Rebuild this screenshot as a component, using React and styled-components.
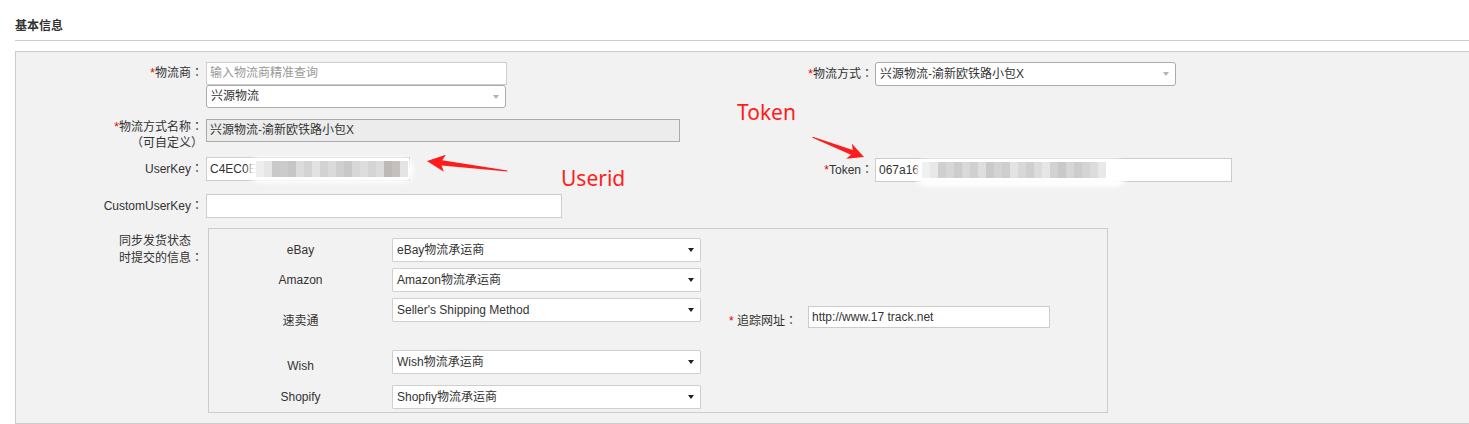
import React from 'react';
import styled, { createGlobalStyle } from 'styled-components';

const GlobalStyle = createGlobalStyle`
  html, body { margin: 0; padding: 0; background: #fff; }
  body {
    font-family: "Liberation Sans", Arial, "Noto Sans CJK SC", sans-serif;
    font-size: 12px;
    color: #333;
  }
  * { box-sizing: border-box; }
`;

const Page = styled.div`
  position: relative;
  width: 1469px;
  height: 424px;
  overflow: hidden;
  padding-left: 15px;
`;

const SectionTitle = styled.h3`
  margin: 0;
  height: 41px;
  padding-top: 19px;
  line-height: 14px;
  font-size: 12px;
  font-weight: bold;
  color: #333;
  border-bottom: 1px solid #ccc;
`;

const Panel = styled.div`
  margin-top: 10px;
  height: 373px;
  background: #f2f2f2;
  border: 1px solid #ccc;
  border-right: none;
  padding-top: 10px;
`;

const FormRow = styled.div`
  display: grid;
  grid-template-columns: 190px 490px 179px 1fr;
  align-items: start;
  margin-top: ${(p) => p.$gap || 0}px;
`;

const Label = styled.div`
  text-align: right;
  padding-right: ${(p) => (p.$pr ?? 3)}px;
  padding-top: ${(p) => p.$pt || 0}px;
  margin-top: ${(p) => p.$mt || 0}px;
  line-height: ${(p) => p.$lh || 24}px;
  height: ${(p) => (p.$height ? `${p.$height}px` : 'auto')};
  white-space: nowrap;
  color: #333;
`;

const Punct = styled.span`
  font-family: "Noto Sans CJK TC", "Noto Sans CJK SC", sans-serif;
  line-height: 0;
`;

const LeftBlock = styled.span`
  display: inline-block;
  text-align: left;
`;

const Req = styled.span`
  color: #e60000;
`;

const FieldStack = styled.div`
  display: flex;
  flex-direction: column;
  margin-top: ${(p) => p.$mt || 0}px;
`;

const TextInput = styled.div`
  position: relative;
  width: ${(p) => p.$w}px;
  height: ${(p) => p.$h || 24}px;
  line-height: ${(p) => (p.$h || 24) - 2}px;
  border: 1px solid ${(p) => p.$border || '#ccc'};
  background: ${(p) => (p.$disabled ? '#ececec' : '#fff')};
  color: ${(p) => (p.$placeholder ? '#999' : '#333')};
  padding: 0 ${(p) => p.$pl ?? 3}px;
  margin-top: ${(p) => p.$mt || 0}px;
  white-space: nowrap;
`;

const SelectBox = styled.div`
  position: relative;
  width: ${(p) => p.$w}px;
  height: ${(p) => p.$h || 24}px;
  line-height: ${(p) => (p.$h || 24) - 2}px;
  border: 1px solid ${(p) => (p.$round ? '#aaa' : '#cfcfcf')};
  border-radius: ${(p) => (p.$round ? 3 : 1)}px;
  background: #fff;
  padding-left: ${(p) => p.$pl ?? 4}px;
  white-space: nowrap;
  color: #333;
`;

const Caret = styled.span`
  position: absolute;
  right: ${(p) => p.$right || 6}px;
  top: 50%;
  margin-top: -2px;
  width: 0;
  height: 0;
  border-left: ${(p) => p.$half || 3.5}px solid transparent;
  border-right: ${(p) => p.$half || 3.5}px solid transparent;
  border-top: 4px solid ${(p) => p.$color || '#222'};
`;

const Smudge = styled.div`
  position: absolute;
  left: ${(p) => p.$x}px;
  top: ${(p) => p.$y}px;
  width: ${(p) => p.$w}px;
  height: ${(p) => p.$h}px;
  background: rgba(255, 255, 255, 0.92);
  border-radius: 10px;
  filter: blur(2px);
`;

const Mosaic = styled.div`
  position: absolute;
  left: ${(p) => p.$x}px;
  top: 3px;
  height: 16px;
  display: flex;
`;

const MosaicCell = styled.span`
  width: 8px;
  height: 100%;
  background: ${(p) => p.$c};
`;

const SyncBox = styled.div`
  grid-column: 2 / 5;
  margin-left: 2px;
  width: 900px;
  height: 185px;
  border: 1px solid #ccc;
  padding-top: 6px;
`;

const PlatformRow = styled.div`
  display: grid;
  grid-template-columns: 183px 309px 1fr;
  height: ${(p) => p.$h}px;
  align-items: center;
`;

const PlatformName = styled.div`
  text-align: center;
  line-height: 14px;
  padding-top: ${(p) => p.$pt || 0}px;
`;

const PlatformSelect = styled(SelectBox)`
  align-self: start;
  margin-top: 3px;
`;

const TrackCell = styled.div`
  align-self: stretch;
  display: flex;
  align-items: center;
  padding-left: 28px;
`;

const TrackLabel = styled.span`
  line-height: 14px;
  margin-right: 11px;
  white-space: nowrap;
`;

const TrackInput = styled(TextInput)`
  align-self: flex-start;
  margin-top: 11px;
`;

const Overlay = styled.svg`
  position: absolute;
  left: 0;
  top: 0;
  pointer-events: none;
`;

const Note = styled.div`
  position: absolute;
  left: ${(p) => p.$x}px;
  top: ${(p) => p.$y}px;
  color: #ff1c1c;
  font-family: "Noto Sans", "Liberation Sans", sans-serif;
  font-size: 21px;
  line-height: 1;
  pointer-events: none;
`;

const userKeyCells = [
  '#eeeeee', '#e6e6e6', '#c9c9c9', '#cbcbcb', '#c6c6c6', '#dcdcdc', '#d4d4d4',
  '#e2e2e2', '#d2d2d2', '#dadada', '#cfcfcf', '#c8c8c8', '#d7d7d7', '#dddddd',
  '#d5d5d5', '#dcdcdc', '#bdb9b5', '#c4c1bd', '#e4e4e4',
];

const tokenCells = [
  '#f0f0f0', '#e8e8e8', '#cfcfcf', '#d6d6d6', '#cccccc', '#d9d9d9', '#d0d0d0',
  '#dedede', '#cacaca', '#d3d3d3', '#cdcdcd', '#e3e3e3', '#d8d8d8', '#cfcfcf',
  '#dcdcdc', '#e6e6e6', '#d2d2d2', '#c9c9c9', '#d6d6d6', '#cccccc', '#d4d4d4',
  '#dcdcdc', '#e8e8e8',
];

const platforms = [
  { name: 'eBay', value: 'eBay物流承运商', h: 30 },
  { name: 'Amazon', value: 'Amazon物流承运商', h: 30 },
  { name: '速卖通', value: "Seller's Shipping Method", h: 52, track: true },
  { name: 'Wish', value: 'Wish物流承运商', h: 35, pt: 2 },
  { name: 'Shopify', value: 'Shopfiy物流承运商', h: 29 },
];

const Colon = () => <Punct>：</Punct>;

export default function App() {
  return (
    <>
      <GlobalStyle />
      <Page>
        <SectionTitle>基本信息</SectionTitle>
        <Panel>
          <FormRow>
            <Label $lh={23} $height={23}><Req>*</Req>物流商<Colon /></Label>
            <FieldStack>
              <TextInput $w={301} $h={23} $placeholder>输入物流商精准查询</TextInput>
              <SelectBox $w={300} $h={23} $round>
                兴源物流
                <Caret $color="#b3b3b3" />
              </SelectBox>
            </FieldStack>
            <Label $pr={2} $height={24}><Req>*</Req>物流方式<Colon /></Label>
            <SelectBox $w={301} $round>
              兴源物流-渝新欧铁路小包X
              <Caret $color="#b3b3b3" />
            </SelectBox>
          </FormRow>

          <FormRow $gap={11}>
            <Label $lh={16} $height={32}>
              <Req>*</Req>物流方式名称<Colon /><br />
              <Punct>（</Punct>可自定义<Punct>）</Punct>
            </Label>
            <TextInput $w={474} $h={23} $border="#aaa" $disabled>兴源物流-渝新欧铁路小包X</TextInput>
          </FormRow>

          <FormRow $gap={6}>
            <Label $height={24}>UserKey<Colon /></Label>
            <TextInput $w={204}>
              C4EC0E
              <Smudge $x={42} $y={-1} $w={164} $h={26} />
              <Mosaic $x={49}>
                {userKeyCells.map((c, i) => <MosaicCell key={i} $c={c} />)}
              </Mosaic>
            </TextInput>
            <Label $pr={2} $mt={1} $height={24}><Req>*</Req>Token<Colon /></Label>
            <TextInput $w={357} $mt={1}>
              067a16
              <Smudge $x={40} $y={0} $w={210} $h={28} />
              <Mosaic $x={46}>
                {tokenCells.map((c, i) => <MosaicCell key={i} $c={c} />)}
              </Mosaic>
            </TextInput>
          </FormRow>

          <FormRow $gap={12}>
            <Label $height={24}>CustomUserKey<Colon /></Label>
            <TextInput $w={356} />
          </FormRow>

          <FormRow $gap={10}>
            <Label $lh={17} $pt={5}>
              <LeftBlock>同步发货状态<br />时提交的信息<Colon /></LeftBlock>
            </Label>
            <SyncBox>
              {platforms.map((p) => (
                <PlatformRow key={p.name} $h={p.h}>
                  <PlatformName $pt={p.pt}>{p.name}</PlatformName>
                  <PlatformSelect $w={309}>
                    {p.value}
                    <Caret $right={6} $half={3} />
                  </PlatformSelect>
                  {p.track && (
                    <TrackCell>
                      <TrackLabel><Req>*</Req> 追踪网址<Colon /></TrackLabel>
                      <TrackInput $w={242} $h={22}>http://www.17 track.net</TrackInput>
                    </TrackCell>
                  )}
                </PlatformRow>
              ))}
            </SyncBox>
          </FormRow>
        </Panel>

        <Note $x={737} $y={102}>Token</Note>
        <Note $x={561} $y={168}>Userid</Note>
        <Overlay width="1469" height="424" viewBox="0 0 1469 424">
          <polygon
            fill="#ff1c1c"
            transform="translate(427 161) rotate(7.1)"
            points="0,0 18,-8.5 15,-2.6 81,-0.6 81,0.6 15,2.6 18,8.5"
          />
          <polygon
            fill="#ff1c1c"
            transform="translate(864 157) rotate(201)"
            points="0,0 16,-8 13,-2.5 55,-0.6 55,0.6 13,2.5 16,8"
          />
        </Overlay>
      </Page>
    </>
  );
}
